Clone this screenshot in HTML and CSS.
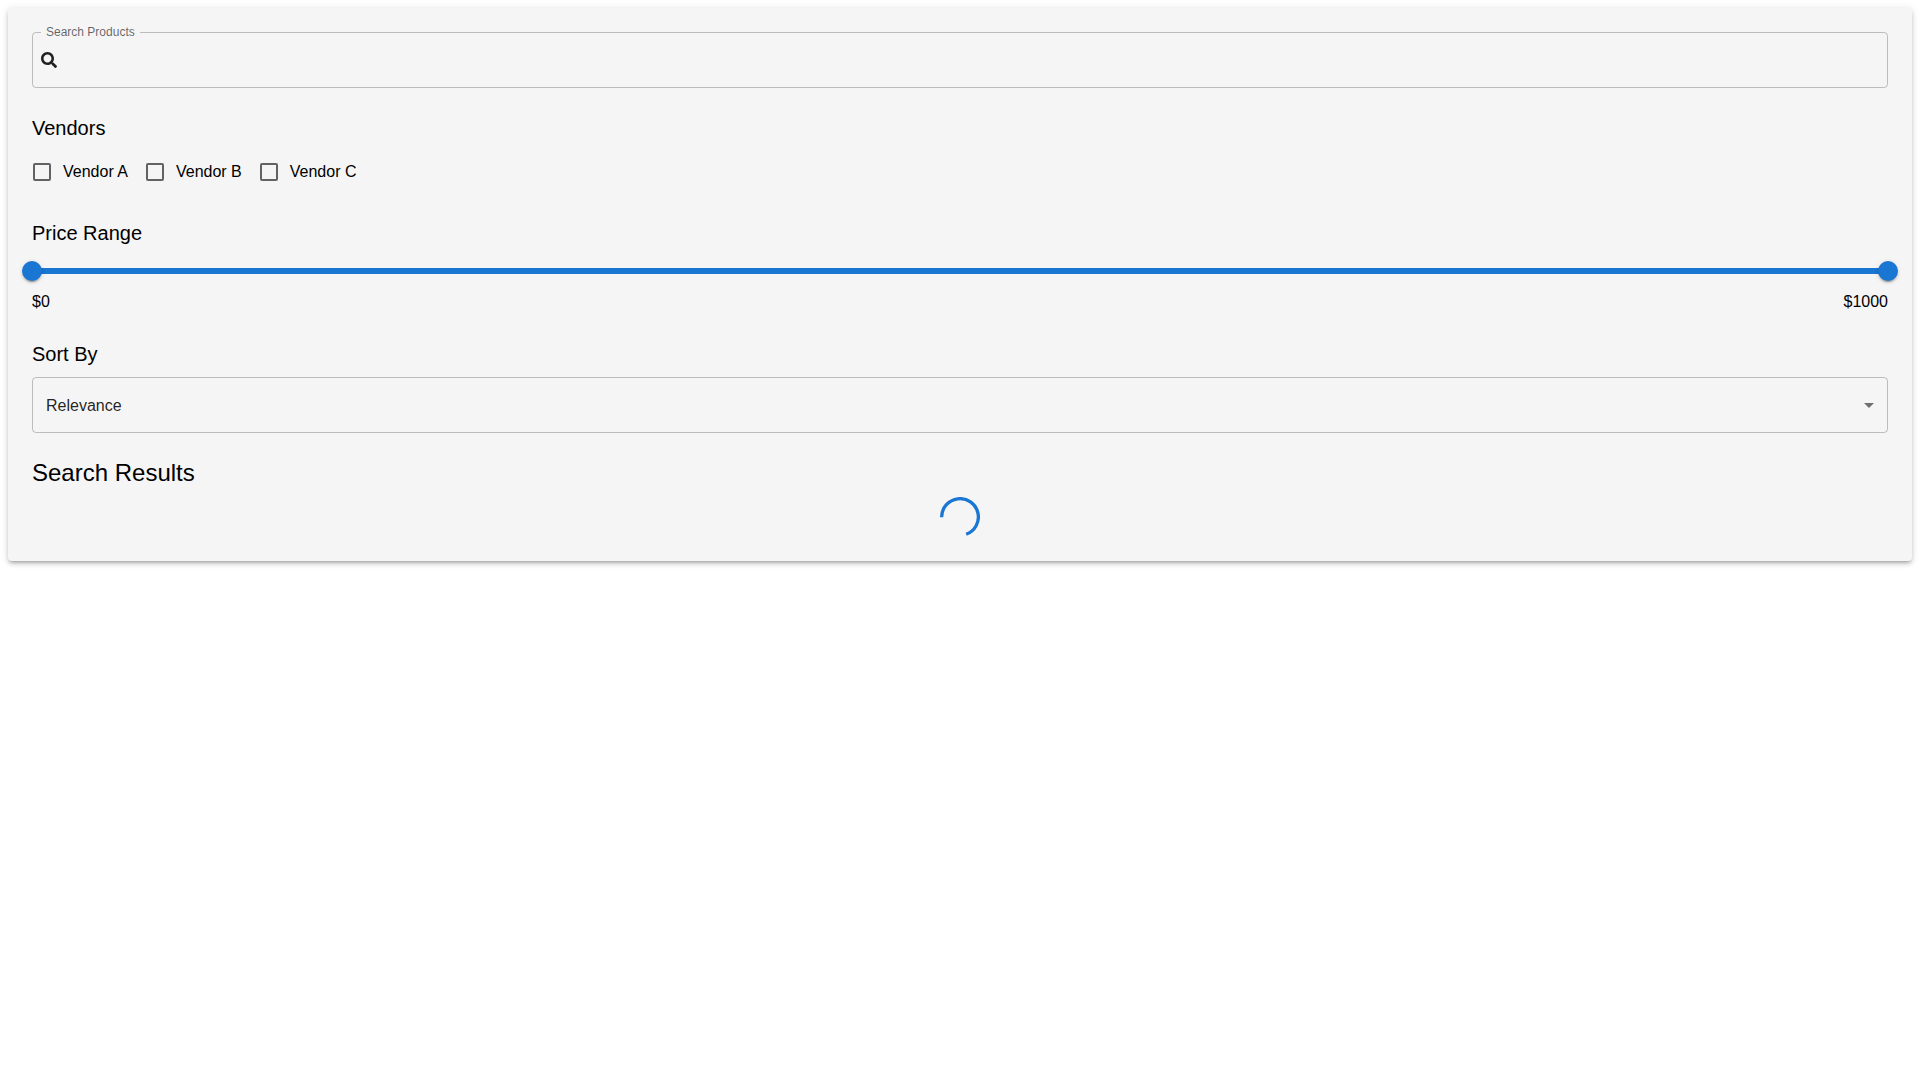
FILE: index.html
```html
<!DOCTYPE html>
<html lang="en">
<head>
  <meta charset="utf-8">
  <meta name="viewport" content="width=device-width, initial-scale=1">
  <title>Product Search</title>
  <link rel="stylesheet" href="styles.css">
</head>
<body>
  <main class="panel">
    <fieldset class="search">
      <legend class="search-legend"><label for="search">Search Products</label></legend>
      <div class="search-row">
        <svg class="search-icon" viewBox="0 0 512 512" aria-hidden="true"><path d="M505 442.7L405.3 343c-4.5-4.5-10.6-7-17-7H372c27.6-35.3 44-79.7 44-128C416 93.1 322.9 0 208 0S0 93.1 0 208s93.1 208 208 208c48.3 0 92.7-16.4 128-44v16.3c0 6.4 2.5 12.5 7 17l99.7 99.7c9.4 9.4 24.6 9.4 33.9 0l28.3-28.3c9.4-9.4 9.4-24.6.1-34zM208 336c-70.7 0-128-57.2-128-128 0-70.7 57.2-128 128-128 70.7 0 128 57.2 128 128 0 70.7-57.2 128-128 128z"/></svg>
        <input class="search-input" id="search" type="text">
      </div>
    </fieldset>

    <section>
      <h2 class="heading">Vendors</h2>
      <div class="vendors">
        <label class="vendor"><input class="vendor-box" type="checkbox">Vendor A</label>
        <label class="vendor"><input class="vendor-box" type="checkbox">Vendor B</label>
        <label class="vendor"><input class="vendor-box" type="checkbox">Vendor C</label>
      </div>
    </section>

    <section>
      <h2 class="heading">Price Range</h2>
      <div class="slider">
        <div class="slider-track"></div>
        <input class="slider-input" type="range" min="0" max="1000" value="0" aria-label="Minimum price">
        <input class="slider-input" type="range" min="0" max="1000" value="1000" aria-label="Maximum price">
      </div>
      <div class="prices"><span>$0</span><span>$1000</span></div>
    </section>

    <section>
      <h2 class="heading" id="sort-heading">Sort By</h2>
      <div class="select">
        <select class="select-input" aria-labelledby="sort-heading">
          <option>Relevance</option>
        </select>
        <svg class="select-arrow" viewBox="0 0 24 24" aria-hidden="true"><path d="M7 10l5 5 5-5z"/></svg>
      </div>
    </section>

    <section>
      <h1 class="title">Search Results</h1>
      <div class="loading" role="progressbar" aria-label="Loading">
        <svg class="spinner" viewBox="0 0 44 44"><path d="M1.8 22.2A20.2 20.2 0 1 1 28.8 41"/></svg>
      </div>
    </section>
  </main>
</body>
</html>
```

FILE: styles.css
```css
* {
  box-sizing: border-box;
}

body {
  min-height: 100vh;
  margin: 0;
  padding: 8px;
  background: #fff;
  color: #000;
  font: 16px/24px "Liberation Sans", Arial, sans-serif;
}

.panel {
  display: flex;
  flex-direction: column;
  gap: 24px;
  padding: 24px;
  border-radius: 4px;
  background: #f5f5f5;
  box-shadow:
    0 3px 3px -2px rgba(0, 0, 0, 0.2),
    0 3px 4px 0 rgba(0, 0, 0, 0.14),
    0 1px 8px 0 rgba(0, 0, 0, 0.12);
}

/* Outlined text field: the legend cuts the top border */
.search {
  min-width: 0;
  margin: -5px 0 0;
  padding: 0 8px 5px;
  border: 1px solid rgba(0, 0, 0, 0.23);
  border-radius: 4px;
}

.search-legend {
  padding: 0 5px;
  color: rgba(0, 0, 0, 0.6);
  font-size: 12px;
  line-height: 11px;
}

.search-row {
  display: flex;
  align-items: center;
  gap: 8px;
  height: 44px;
}

.search-icon {
  width: 16px;
  height: 16px;
  fill: rgba(0, 0, 0, 0.87);
}

.search-input {
  flex: 1;
  min-width: 0;
  border: 0;
  outline: 0;
  background: transparent;
  color: rgba(0, 0, 0, 0.87);
  font: inherit;
}

.heading {
  margin: 0 0 7px;
  font-size: 20px;
  font-weight: 400;
  line-height: 32px;
}

.title {
  margin: 0 0 8px;
  font-size: 24px;
  font-weight: 400;
  line-height: 32px;
}

.vendors {
  display: flex;
  flex-wrap: wrap;
  gap: 0 17px;
}

.vendor {
  display: flex;
  align-items: center;
  gap: 12px;
  height: 42px;
}

.vendor-box {
  appearance: none;
  width: 18px;
  height: 18px;
  margin: 0 0 0 1px;
  border: 2px solid rgba(0, 0, 0, 0.6);
  border-radius: 2px;
}

.vendor-box:checked {
  border-color: #1976d2;
  background: #1976d2;
}

/* Two range inputs share one grid cell over the track */
.slider {
  display: grid;
  align-items: center;
  height: 30px;
  margin-bottom: 4px;
}

.slider-track,
.slider-input {
  grid-area: 1 / 1;
}

.slider-track {
  height: 6px;
  border-radius: 3px;
  background: #1976d2;
}

.slider-input {
  appearance: none;
  height: 20px;
  margin: 0 -10px;
  background: transparent;
  pointer-events: none;
}

.slider-input::-webkit-slider-thumb {
  appearance: none;
  width: 20px;
  height: 20px;
  border-radius: 50%;
  background: #1976d2;
  box-shadow:
    0 3px 1px -2px rgba(0, 0, 0, 0.2),
    0 2px 2px 0 rgba(0, 0, 0, 0.14),
    0 1px 5px 0 rgba(0, 0, 0, 0.12);
  pointer-events: auto;
}

.prices {
  display: flex;
  justify-content: space-between;
}

.select {
  display: grid;
  align-items: center;
}

.select-input,
.select-arrow {
  grid-area: 1 / 1;
}

.select-input {
  appearance: none;
  height: 56px;
  padding: 2px 32px 0 13px;
  border: 1px solid rgba(0, 0, 0, 0.23);
  border-radius: 4px;
  background: transparent;
  color: rgba(0, 0, 0, 0.87);
  font: inherit;
}

.select-arrow {
  justify-self: end;
  width: 24px;
  height: 24px;
  margin-right: 7px;
  fill: rgba(0, 0, 0, 0.54);
  pointer-events: none;
}

.loading {
  display: flex;
  justify-content: center;
}

.spinner {
  width: 40px;
  height: 40px;
  fill: none;
  stroke: #1976d2;
  stroke-width: 3.6;
}
```
